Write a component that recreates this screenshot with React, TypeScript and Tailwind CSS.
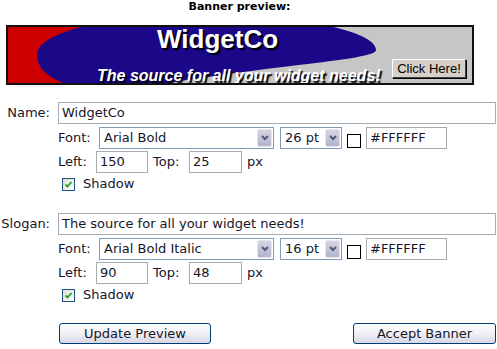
import React from "react";

const ui = "font-['DejaVu_Sans',Verdana,sans-serif] text-[13px] text-[#16162a]";

function TextBox({ value, className }: { value: string; className: string }) {
  return (
    <div
      className={`flex h-[22px] items-center overflow-hidden whitespace-nowrap border border-[#a5acb2] bg-white px-[3px] ${className}`}
    >
      {value}
    </div>
  );
}

function Select({ value, className }: { value: string; className: string }) {
  return (
    <div className={`relative flex h-[22px] items-center border border-[#7f9db9] bg-white pl-[4px] ${className}`}>
      <span className="whitespace-nowrap">{value}</span>
      {/* XP style drop button */}
      <div className="absolute right-px top-px bottom-px flex w-[15px] items-center justify-center rounded-[2px] border border-[#e6e6f0] bg-linear-to-b from-[#d4d4e2] to-[#b4b4ca]">
        <svg width="8" height="6" viewBox="0 0 8 6">
          <polyline points="1,1 4,4 7,1" fill="none" stroke="#4d5a78" strokeWidth="2" />
        </svg>
      </div>
    </div>
  );
}

function Check() {
  return (
    <div className="flex h-[13px] w-[13px] items-center justify-center border border-[#1c5180] bg-linear-to-br from-[#dcdcd7] to-white">
      <svg width="9" height="9" viewBox="0 0 9 9">
        <polyline points="1.5,4.5 3.5,6.5 7.5,2" fill="none" stroke="#21a121" strokeWidth="1.8" />
      </svg>
    </div>
  );
}

function FieldBlock({
  label,
  text,
  font,
  size,
  left,
  top,
}: {
  label: string;
  text: string;
  font: string;
  size: string;
  left: string;
  top: string;
}) {
  return (
    <div>
      <div className="flex h-[22px] items-center">
        <span className="w-[50px] text-right">{label}</span>
        <TextBox value={text} className="ml-[8px] w-[438px]" />
      </div>
      <div className="mt-[3px] flex h-[22px] items-center pl-[58px]">
        <span className="w-[41px]">Font:</span>
        <Select value={font} className="w-[175px]" />
        <Select value={size} className="ml-[6px] w-[62px]" />
        <div className="ml-[5px] mt-[6px] h-[14px] w-[14px] border border-black bg-white" />
        <TextBox value="#FFFFFF" className="ml-[5px] w-[81px]" />
      </div>
      <div className="mt-[2px] flex h-[22px] items-center pl-[58px]">
        <span className="w-[38px]">Left:</span>
        <TextBox value={left} className="w-[52px]" />
        <span className="ml-[5px] w-[36px]">Top:</span>
        <TextBox value={top} className="w-[53px]" />
        <span className="ml-[5px]">px</span>
      </div>
      <div className="mt-[4px] flex h-[14px] items-center pl-[62px]">
        <Check />
        <span className="ml-[8px]">Shadow</span>
      </div>
    </div>
  );
}

function XpButton({ label, className }: { label: string; className: string }) {
  return (
    <button
      className={`h-[21px] rounded-[3px] border border-[#003c74] bg-linear-to-b from-white via-[#f0f0f4] to-[#d6d6e6] ${ui} ${className}`}
    >
      {label}
    </button>
  );
}

function Banner() {
  return (
    <div className="relative ml-[6px] h-[60px] w-[468px] overflow-hidden border-2 border-[#111]">
      <svg className="absolute inset-0" width="464" height="56" viewBox="8 27 464 56">
        <rect x="8" y="27" width="130" height="56" fill="#cc0000" />
        <rect x="138" y="27" width="334" height="56" fill="#c6c6c6" />
        <path
          d="M37,55 C37,30 120,14 205,14 C290,14 376,30 376,50 C376,60 280,64 163,84 C110,100 37,88 37,55 Z"
          fill="#1a0888"
        />
      </svg>
      <span className="absolute left-[149px] top-[-1px] font-['Liberation_Sans',Arial,sans-serif] text-[26px] font-bold leading-none text-white [text-shadow:2px_2px_1px_#000]">
        WidgetCo
      </span>
      <span className="absolute left-[89px] top-[41px] font-['Liberation_Sans',Arial,sans-serif] text-[16px] font-bold italic leading-none whitespace-nowrap text-white [text-shadow:2px_2px_1px_#000]">
        The source for all your widget needs!
      </span>
      <div className="absolute left-[384px] top-[32px] flex h-[19px] w-[74px] items-center justify-center border border-t-white border-l-white border-r-[#404040] border-b-[#404040] bg-[#d4d0c8] font-['Liberation_Sans',Arial,sans-serif] text-[13px] text-black shadow-[1px_1px_0_#000]">
        Click Here!
      </div>
    </div>
  );
}

export default function App() {
  return (
    <div className={`h-[349px] w-[497px] bg-white ${ui}`}>
      <div className="h-[13px] w-[479px] text-center text-[11px] font-bold leading-[13px] text-black">
        Banner preview:
      </div>
      <div className="mt-[12px]">
        <Banner />
      </div>
      <div className="mt-[17px]">
        <FieldBlock label="Name:" text="WidgetCo" font="Arial Bold" size="26 pt" left="150" top="25" />
      </div>
      <div className="mt-[22px]">
        <FieldBlock
          label="Slogan:"
          text="The source for all your widget needs!"
          font="Arial Bold Italic"
          size="16 pt"
          left="90"
          top="48"
        />
      </div>
      <div className="mt-[21px] flex w-[496px] justify-between pl-[59px]">
        <XpButton label="Update Preview" className="w-[152px]" />
        <XpButton label="Accept Banner" className="w-[143px]" />
      </div>
    </div>
  );
}
